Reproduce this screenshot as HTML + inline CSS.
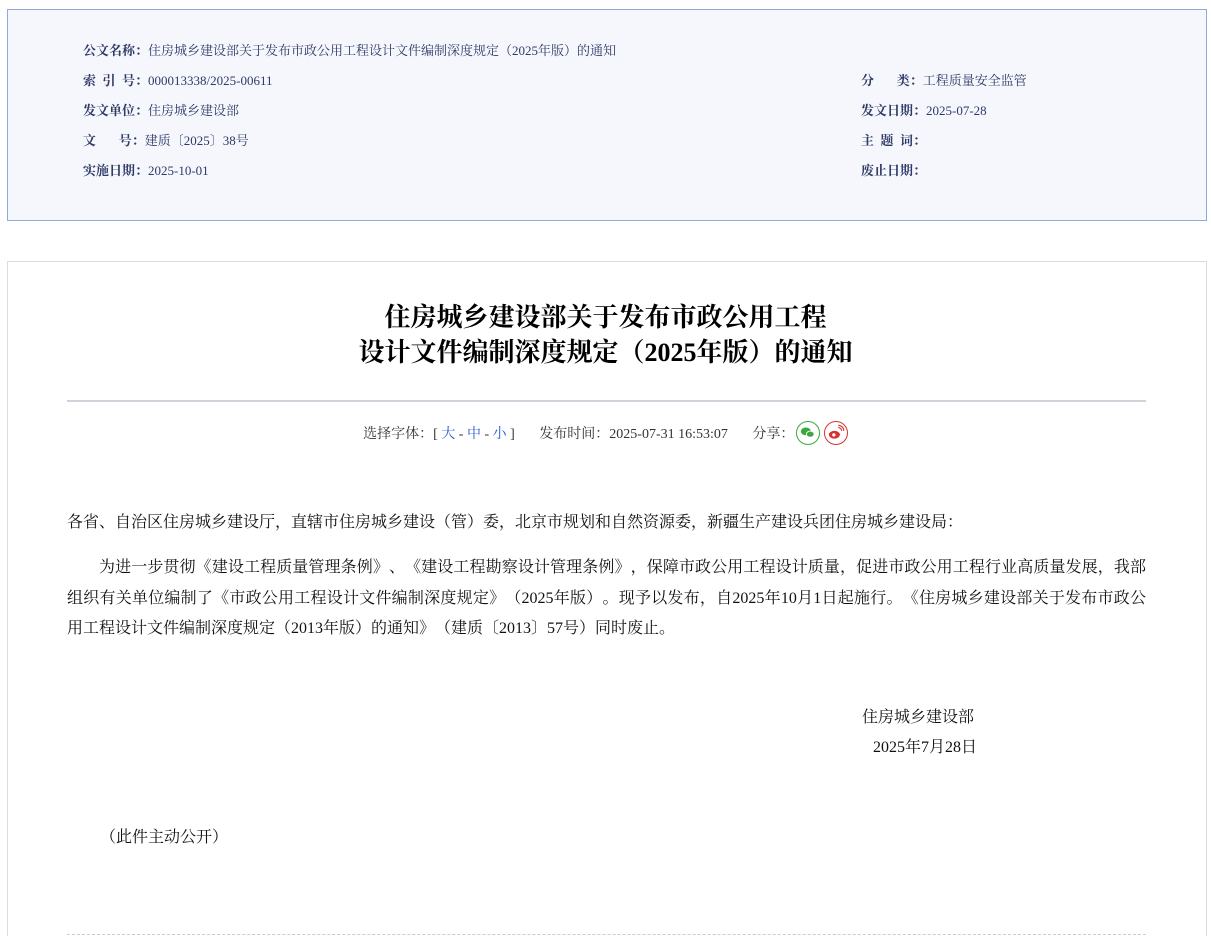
<!DOCTYPE html>
<html><head><meta charset="utf-8"><style>
html,body{margin:0;overflow:hidden;height:936px}
body{background:#fff;font-family:"Liberation Serif","Noto Serif CJK SC",serif;width:1211px;position:relative;text-spacing-trim:space-all}
.info{position:absolute;left:7px;top:9px;width:1198px;height:210px;background:#f5f7fd;border:1px solid #8fa8e0;color:#2f3a66;font-size:13px}
.r{position:absolute;white-space:nowrap;line-height:16px}
.r b{font-weight:bold}
.main{position:absolute;left:7px;top:261px;width:1198px;height:690px;border:1px solid #dcdcdc}
.t{position:absolute;left:0;width:1211px;text-align:center;font-size:26px;font-weight:bold;color:#000;line-height:34px}
.hr{position:absolute;left:67px;width:1079px;top:400px;height:2px;background:#d0d3da}
.meta{position:absolute;top:423px;left:0px;width:1211px;text-align:center;font-size:14px;color:#333;white-space:nowrap}
.meta a{color:#2a5fd0;text-decoration:none}
.p{position:absolute;left:67px;width:1079px;font-size:16px;color:#111;line-height:30.5px;text-align:justify}
.ic{display:inline-block;width:24px;height:24px;border-radius:50%;vertical-align:middle;box-sizing:border-box;position:relative;top:-2px}
</style></head><body>
<div class="info">
<div class="r" style="left:75px;top:33px"><b>公文名称：</b>住房城乡建设部关于发布市政公用工程设计文件编制深度规定（2025年版）的通知</div>
<div class="r" style="left:75px;top:63px"><b>索&nbsp;&nbsp;引&nbsp;&nbsp;号：</b>000013338/2025-00611</div>
<div class="r" style="left:75px;top:93px"><b>发文单位：</b>住房城乡建设部</div>
<div class="r" style="left:75px;top:123px"><b>文&nbsp;&nbsp;&nbsp;&nbsp;&nbsp;&nbsp;&nbsp;号：</b>建质〔2025〕38号</div>
<div class="r" style="left:75px;top:153px"><b>实施日期：</b>2025-10-01</div>
<div class="r" style="left:853px;top:63px"><b>分&nbsp;&nbsp;&nbsp;&nbsp;&nbsp;&nbsp;&nbsp;类：</b>工程质量安全监管</div>
<div class="r" style="left:853px;top:93px"><b>发文日期：</b>2025-07-28</div>
<div class="r" style="left:853px;top:123px"><b>主&nbsp;&nbsp;题&nbsp;&nbsp;词：</b></div>
<div class="r" style="left:853px;top:153px"><b>废止日期：</b></div>
</div>
<div class="main"></div>
<div class="t" style="top:301px">住房城乡建设部关于发布市政公用工程</div>
<div class="t" style="top:336px">设计文件编制深度规定（2025年版）的通知</div>
<div class="hr"></div>
<div class="meta">选择字体：[ <a>大</a> - <a>中</a> - <a>小</a> ]&nbsp;&nbsp;&nbsp;&nbsp;&nbsp;&nbsp;&nbsp;发布时间：2025-07-31 16:53:07&nbsp;&nbsp;&nbsp;&nbsp;&nbsp;&nbsp;&nbsp;分享：<span class="ic" style="border:1.5px solid #3aa83a;margin-left:2px"><svg width="21" height="21" viewBox="0 0 19 19" style="position:absolute;left:0;top:0"><ellipse cx="8" cy="8.5" rx="4.5" ry="3.5" fill="#3aa83a"/><ellipse cx="12" cy="11" rx="3.5" ry="2.8" fill="#3aa83a" stroke="#fff" stroke-width="0.8"/></svg></span> <span class="ic" style="border:1.5px solid #d83030"><svg width="21" height="21" viewBox="0 0 19 19" style="position:absolute;left:0;top:0"><ellipse cx="8.5" cy="11.5" rx="5" ry="3.5" fill="#d83030"/><circle cx="8" cy="11.7" r="1.5" fill="#fff"/><path d="M12 5a3 3 0 0 1 3 3M12 3a5 5 0 0 1 5 5" stroke="#d83030" fill="none" stroke-width="1"/></svg></span></div>
<div class="p" style="top:508px">各省、自治区住房城乡建设厅，直辖市住房城乡建设（管）委，北京市规划和自然资源委，新疆生产建设兵团住房城乡建设局：</div>
<div class="p" style="top:553px;text-indent:32px">为进一步贯彻《建设工程质量管理条例》、《建设工程勘察设计管理条例》，保障市政公用工程设计质量，促进市政公用工程行业高质量发展，我部组织有关单位编制了《市政公用工程设计文件编制深度规定》（2025年版）。现予以发布，自2025年10月1日起施行。《住房城乡建设部关于发布市政公用工程设计文件编制深度规定（2013年版）的通知》（建质〔2013〕57号）同时废止。</div>
<div class="p" style="top:703px;left:862px;width:200px">住房城乡建设部</div>
<div class="p" style="top:733px;left:873px;width:200px">2025年7月28日</div>
<div class="p" style="top:823px;left:100px;width:300px">（此件主动公开）</div>
<div style="position:absolute;left:67px;top:934px;width:1079px;border-top:1px dashed #ccc"></div>
</body></html>
